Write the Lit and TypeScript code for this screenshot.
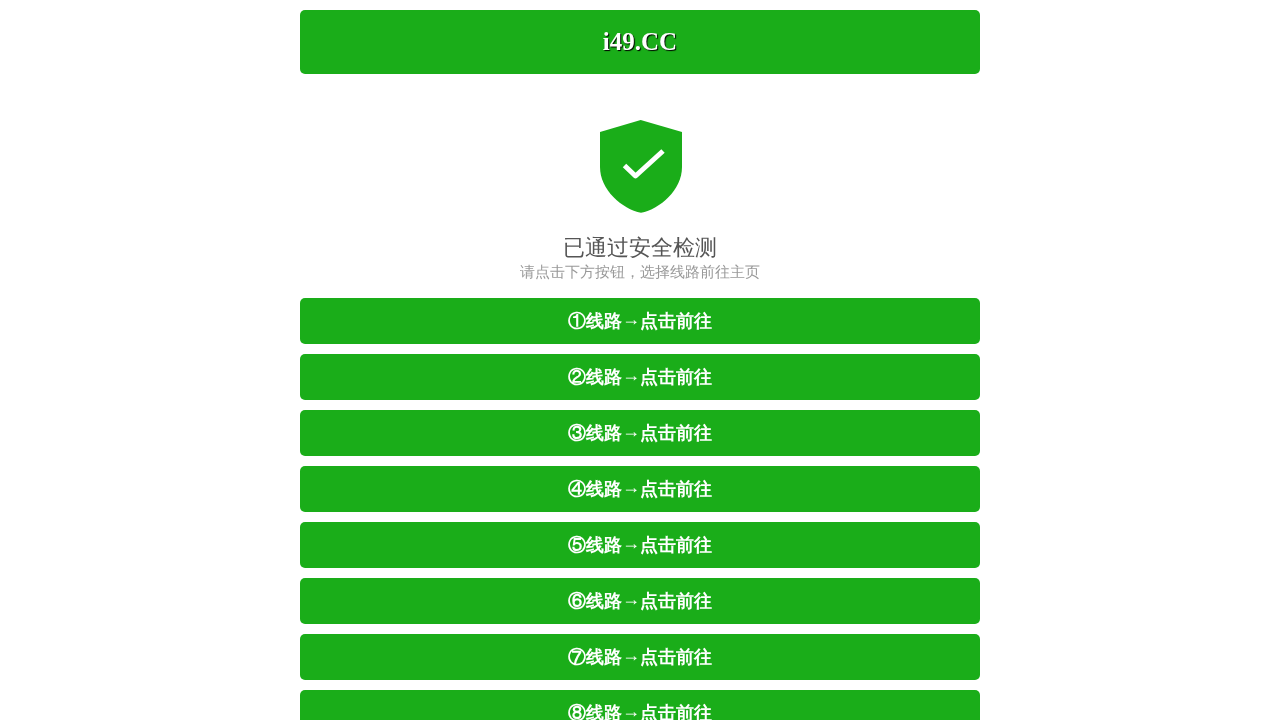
import { LitElement, html, css } from "lit";
import { customElement } from "lit/decorators.js";

const LINES = ["①", "②", "③", "④", "⑤", "⑥", "⑦", "⑧"];

@customElement("app-root")
export class AppRoot extends LitElement {
  static styles = css`
    :host {
      display: block;
      font-family: "Liberation Serif", serif;
      background: #fff;
    }
    .page {
      width: 680px;
      margin: 0 auto;
      padding-top: 10px;
      display: flex;
      flex-direction: column;
      will-change: transform;
    }
    .header {
      height: 64px;
      border-radius: 5px;
      background: #1aad19;
      color: #fff;
      display: flex;
      align-items: center;
      justify-content: center;
      font-size: 25px;
      font-weight: bold;
      text-shadow: 1px 1px 1px #000;
    }
    .shield {
      display: block;
      width: 84px;
      height: 94px;
      margin: 46px auto 0;
    }
    .title {
      margin-top: 20px;
      text-align: center;
      font-size: 22px;
      line-height: 28px;
      color: #555;
    }
    .sub {
      text-align: center;
      font-size: 15px;
      line-height: 20px;
      color: #999;
    }
    .list {
      margin-top: 16px;
      display: flex;
      flex-direction: column;
      gap: 10px;
    }
    .btn {
      height: 46px;
      line-height: 46px;
      border-radius: 5px;
      background: #1aad19;
      color: #fff;
      text-align: center;
      font-size: 18px;
      font-weight: bold;
    }
    .arrow {
      font-weight: normal;
      line-height: 1;
      vertical-align: 2px;
    }
  `;

  render() {
    return html`
      <div class="page">
        <div class="header">i49.CC</div>
        <svg class="shield" viewBox="0 0 84 94">
          <path
            fill="#1aad19"
            d="M42.700 0 L84 12 V47 C84 70 62 89 43 92.800 C24 89 2 70 2 47 V12 Z"
          />
          <path
            fill="none"
            stroke="#fff"
            stroke-width="5"
            stroke-linejoin="round"
            d="M26.500 45.500 L37.500 56 L65 31"
          />
        </svg>
        <div class="title">已通过安全检测</div>
        <div class="sub">请点击下方按钮，选择线路前往主页</div>
        <div class="list">
          ${LINES.map((n) => html`<div class="btn">${n}线路<span class="arrow">→</span>点击前往</div>`)}
        </div>
      </div>
    `;
  }
}
